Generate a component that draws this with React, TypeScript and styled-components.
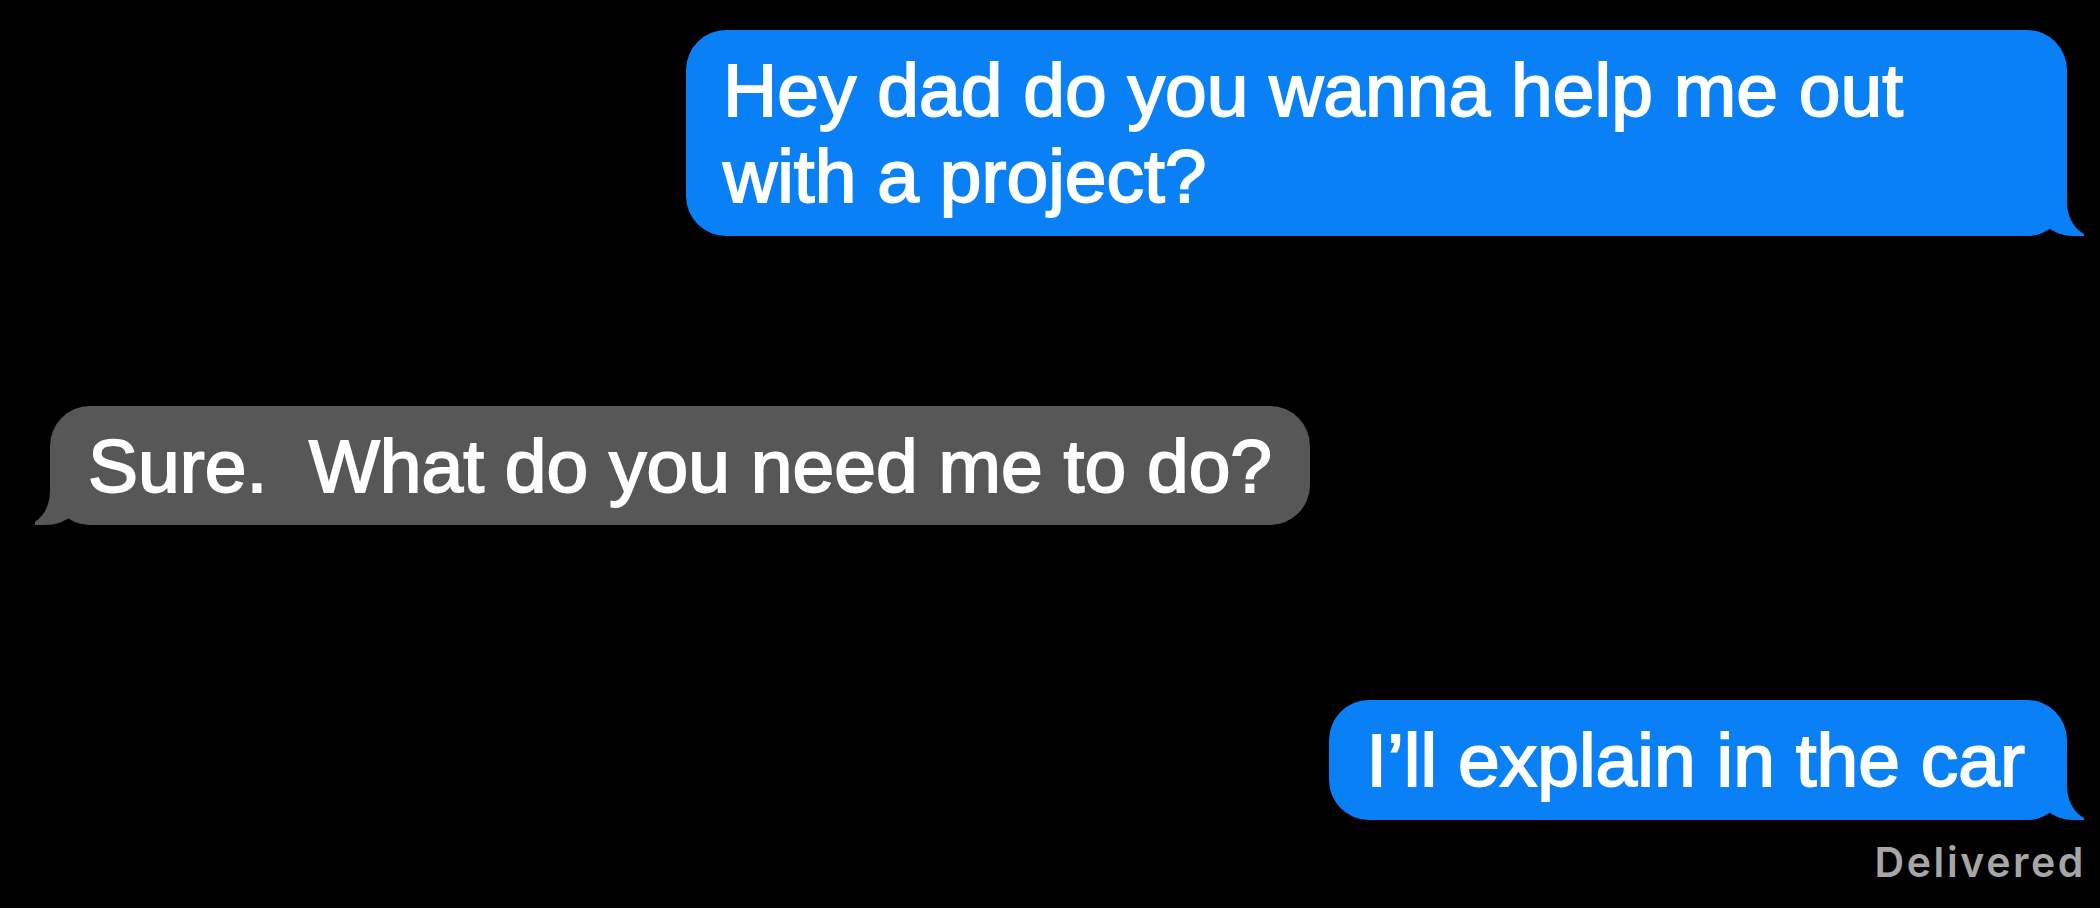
import React from "react";
import styled, { createGlobalStyle, css } from "styled-components";

const BLUE = "#0a80f6";
const GRAY = "#575757";

const GlobalStyle = createGlobalStyle`
  html, body {
    margin: 0;
    padding: 0;
    background: #000;
  }
  body {
    width: 2100px;
    height: 908px;
    overflow: hidden;
    font-family: "Liberation Sans", Arial, sans-serif;
  }
`;

type Side = "sent" | "received";

const Thread = styled.main`
  width: 2100px;
  height: 908px;
  box-sizing: border-box;
  padding-top: 30px;
  display: flex;
  flex-direction: column;
  background: #000;
`;

const Row = styled.div<{ $side: Side; $gap: number }>`
  display: flex;
  justify-content: ${(p) => (p.$side === "sent" ? "flex-end" : "flex-start")};
  padding: ${(p) => (p.$side === "sent" ? "0 33px 0 0" : "0 0 0 50px")};
  margin-top: ${(p) => p.$gap}px;
`;

const Bubble = styled.div<{ $side: Side; $maxWidth?: number }>`
  position: relative;
  z-index: 0;
  box-sizing: border-box;
  max-width: ${(p) => (p.$maxWidth ? `${p.$maxWidth}px` : "none")};
  padding: ${(p) => (p.$side === "sent" ? "17px 42px 17px 37px" : "17px 38px 16px 38px")};
  border-radius: 40px;
  background: ${(p) => (p.$side === "sent" ? BLUE : GRAY)};
  color: #fff;
  font-family: "Liberation Sans", Arial, sans-serif;
  font-size: 75px;
  line-height: 86px;
  white-space: pre-wrap;
  -webkit-text-stroke: 1.8px #fff;

  &::before {
    content: "";
    position: absolute;
    z-index: -1;
    bottom: 0;
    width: 50px;
    height: 48px;
    background: ${(p) => (p.$side === "sent" ? BLUE : GRAY)};
  }

  &::after {
    content: "";
    position: absolute;
    z-index: -1;
    bottom: 0;
    width: 60px;
    height: 48px;
    background: #000;
  }

  ${(p) =>
    p.$side === "sent"
      ? css`
          &::before {
            right: -17px;
            border-bottom-left-radius: 40px 34px;
          }
          &::after {
            right: -60px;
            border-bottom-left-radius: 26px 34px;
          }
        `
      : css`
          &::before {
            left: -15px;
            border-bottom-right-radius: 40px 34px;
          }
          &::after {
            left: -60px;
            border-bottom-right-radius: 26px 34px;
          }
        `}
`;

const Status = styled.div`
  align-self: flex-end;
  margin: 22px 14px 0 0;
  font-family: "Inter", "Liberation Sans", sans-serif;
  font-weight: 600;
  font-size: 41px;
  line-height: 1;
  letter-spacing: 2.6px;
  color: #a6a6a6;
`;

export default function App() {
  return (
    <>
      <GlobalStyle />
      <Thread>
        <Row $side="sent" $gap={0}>
          <Bubble $side="sent" $maxWidth={1381}>
            Hey dad do you wanna help me out with a project?
          </Bubble>
        </Row>
        <Row $side="received" $gap={170}>
          <Bubble $side="received">Sure.  What do you need me to do?</Bubble>
        </Row>
        <Row $side="sent" $gap={175}>
          <Bubble $side="sent">I’ll explain in the car</Bubble>
        </Row>
        <Status>Delivered</Status>
      </Thread>
    </>
  );
}
